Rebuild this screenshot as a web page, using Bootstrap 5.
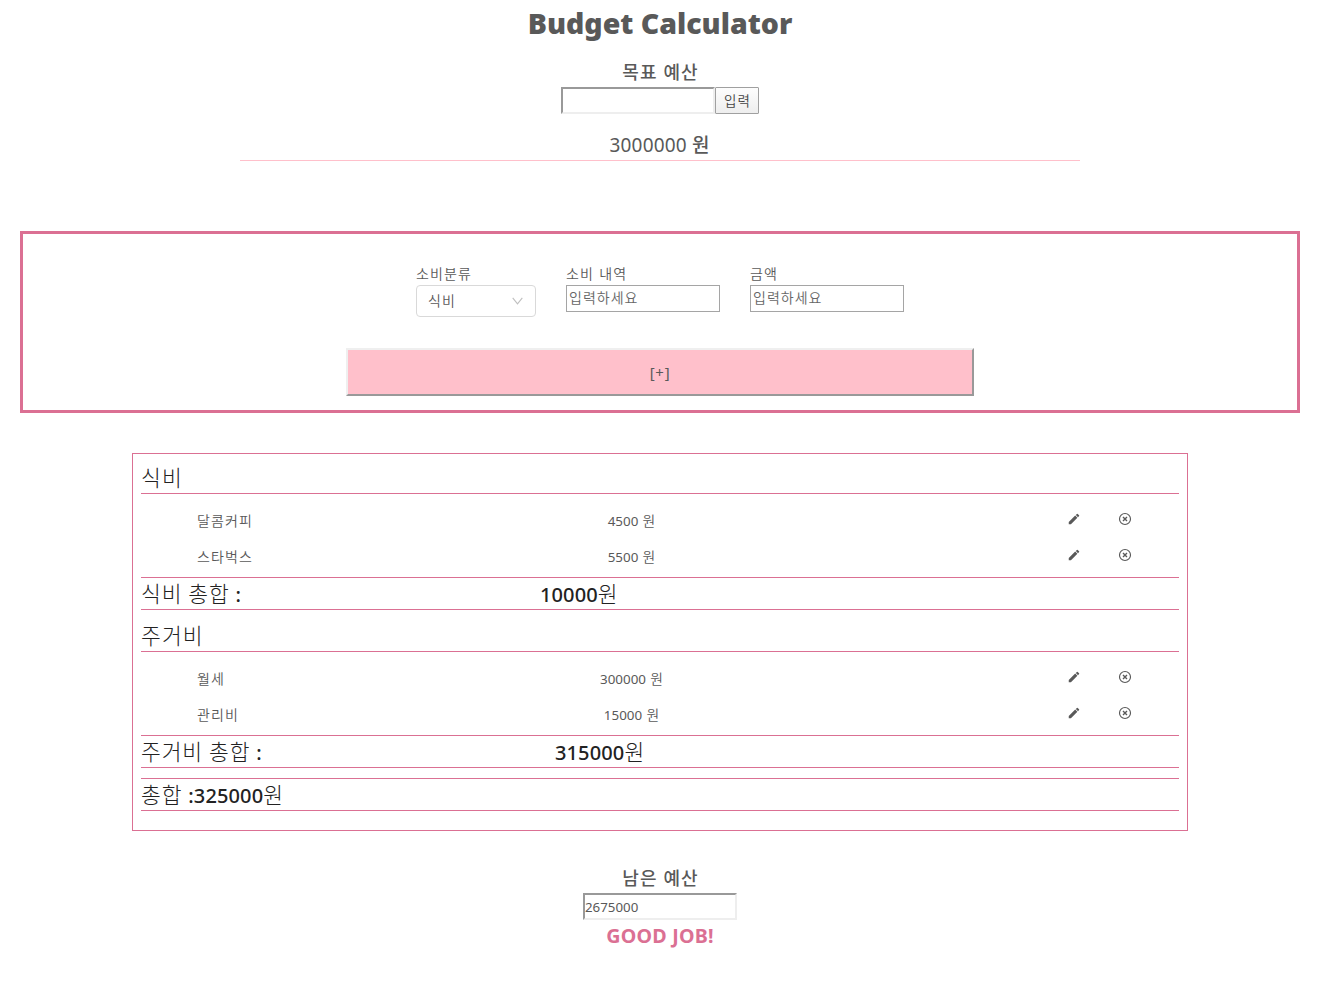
<!DOCTYPE html>
<html lang="ko">
<head>
<meta charset="utf-8">
<title>Budget Calculator</title>
<link href="https://cdn.jsdelivr.net/npm/bootstrap@5.3.0/dist/css/bootstrap.min.css" rel="stylesheet">
<style>
body{font-family:"Noto Sans","Noto Sans CJK KR",sans-serif;font-size:14px;line-height:22px;color:#595959;background:#fff;white-space:nowrap}
.kr{font-family:"Noto Sans CJK KR",sans-serif;font-weight:350;letter-spacing:1px}
.kb{font-family:"Noto Sans CJK KR",sans-serif;font-weight:500;letter-spacing:1px}
h1{font-size:28.5px;line-height:46px;font-weight:900;margin:0;height:57px}
h2{font-size:18px;line-height:28px;height:30px;margin:0;padding-left:1px}
.old-input{width:154px;height:27px;border:2px solid;border-color:#999 #eee #eee #999;padding:0;font-size:13.3px;color:#595959;border-radius:0;outline:0;background:#fff}
.enter-btn{width:44px;height:27px;border:1px solid #a0a0a0;border-radius:1px;background:linear-gradient(#fdfdfd,#eee);padding:0 0 2px 1px;font-size:13.5px;line-height:22px;color:#444}
.goal{width:840px;height:47px;border-bottom:1px solid pink;padding-top:16px;font-size:19px;line-height:28px;letter-spacing:.2px}
.goal .kb{font-size:19px}
.entry{margin:70px 20px 0;height:182px;border:3px solid #db7093;padding-top:29px}
.fields{gap:30px;height:85px}
.fields label{display:block;height:22px;line-height:21px;font-size:14px;letter-spacing:1.15px}
.flat-input{width:154px;height:27px;border:1px solid #a5a5a5;padding:0 2px;font-size:14px;line-height:23px;color:#666}
.pick{width:120px;height:32px;border:1px solid #d9d9d9;border-radius:4px;padding:0 12px 3px 11px;font-size:14px}
.pick svg{margin-top:3px}
.add-btn{width:628px;height:48px;border:2px solid;border-color:#efefef #999 #999 #efefef;background:#ffc0cb;color:#595959;font-size:15px;letter-spacing:.7px;padding:0}
.ledger{width:1056px;height:378px;margin:40px auto 0;border:1px solid #db7093;padding:8px}
.cat{height:32px;font-size:21.5px;line-height:29px;border-bottom:1px solid #db7093}
.cat,.sum{color:#222}
.cat.kr,.sum .kr{font-weight:300;letter-spacing:1.1px}
.cat-next{margin-top:10px}
.items{height:83px;padding:9px 47px 0 56px}
.item{height:36px;font-size:13.4px;line-height:34px}
.item .who{width:300px;font-size:14px;letter-spacing:1.15px}
.item .amt{width:270px;text-align:center;word-spacing:.8px}
.item .amt .kr{font-size:13.8px}
.item .tools{margin-left:auto;width:65px;height:32px}
.sum{height:33px;border:solid #db7093;border-width:1px 0;font-size:20px;line-height:30px}
.sum .kr{font-size:21.5px;letter-spacing:.9px;word-spacing:-1px}
.sum b{font-weight:500;letter-spacing:.12px}
.sum i{font:500 20px "Noto Sans",sans-serif;letter-spacing:0}
.lab-a{width:399px}.lab-b{width:414px}
.good{font-size:19.7px;line-height:32px;font-weight:700;color:#db7093;letter-spacing:.2px}
footer{padding-top:32px}
</style>
<script src="https://cdn.jsdelivr.net/npm/bootstrap@5.3.0/dist/js/bootstrap.bundle.min.js"></script>
</head>
<body>
<svg class="d-none">
<symbol id="pen" viewBox="0 0 24 24"><path d="M3 17.25V21h3.75L17.81 9.94l-3.75-3.75L3 17.25zM20.71 7.04c.39-.39.39-1.02 0-1.41l-2.34-2.34a1 1 0 0 0-1.41 0l-1.83 1.83 3.75 3.75 1.83-1.83z"/></symbol>
<symbol id="del" viewBox="0 0 14 14"><circle cx="7" cy="7" r="5.5" fill="none" stroke="currentColor" stroke-width="1.15"/><path d="M5 5l4 4M9 5l-4 4" stroke="currentColor" stroke-width="1.4"/></symbol>
</svg>
<header class="d-flex flex-column align-items-center">
<h1>Budget Calculator</h1>
<h2 class="kb">목표 예산</h2>
<div class="d-flex"><input class="old-input" aria-label="목표 예산"><button class="enter-btn kr">입력</button></div>
<div class="goal text-center">3000000 <span class="kb">원</span></div>
</header>
<section class="entry">
<div class="fields d-flex justify-content-center">
<div><label class="kr">소비분류</label><div class="pick kr d-flex align-items-center justify-content-between"><span>식비</span><svg width="11" height="8" viewBox="0 0 11 8" fill="none" stroke="#bfbfbf" stroke-width="1.1"><path d="M.7.8l4.8 6 4.8-6"/></svg></div></div>
<div><label class="kr">소비 내역</label><div class="flat-input kr">입력하세요</div></div>
<div><label class="kr">금액</label><div class="flat-input kr">입력하세요</div></div>
</div>
<div class="d-flex justify-content-center"><button class="add-btn">[+]</button></div>
</section>
<main class="ledger">
<div class="cat kr">식비</div>
<div class="items">
<div class="item d-flex"><span class="who kr">달콤커피</span><span class="amt">4500 <span class="kr">원</span></span><span class="tools d-flex align-items-center justify-content-between"><svg width="14" height="14" fill="#595959"><use href="#pen"/></svg><svg width="14" height="14"><use href="#del"/></svg></span></div>
<div class="item d-flex"><span class="who kr">스타벅스</span><span class="amt">5500 <span class="kr">원</span></span><span class="tools d-flex align-items-center justify-content-between"><svg width="14" height="14" fill="#595959"><use href="#pen"/></svg><svg width="14" height="14"><use href="#del"/></svg></span></div>
</div>
<div class="sum d-flex"><span class="kr lab-a">식비 총합 <i>:</i></span><span><b>10000</b><span class="kr">원</span></span></div>
<div class="cat kr cat-next">주거비</div>
<div class="items">
<div class="item d-flex"><span class="who kr">월세</span><span class="amt">300000 <span class="kr">원</span></span><span class="tools d-flex align-items-center justify-content-between"><svg width="14" height="14" fill="#595959"><use href="#pen"/></svg><svg width="14" height="14"><use href="#del"/></svg></span></div>
<div class="item d-flex"><span class="who kr">관리비</span><span class="amt">15000 <span class="kr">원</span></span><span class="tools d-flex align-items-center justify-content-between"><svg width="14" height="14" fill="#595959"><use href="#pen"/></svg><svg width="14" height="14"><use href="#del"/></svg></span></div>
</div>
<div class="sum d-flex"><span class="kr lab-b">주거비 총합 <i>:</i></span><span><b>315000</b><span class="kr">원</span></span></div>
<div class="sum cat-next"><span class="kr">총합 </span><b>:325000</b><span class="kr">원</span></div>
</main>
<footer class="d-flex flex-column align-items-center">
<h2 class="kb">남은 예산</h2>
<input class="old-input" value="2675000" aria-label="남은 예산">
<div class="good">GOOD JOB!</div>
</footer>
</body>
</html>
